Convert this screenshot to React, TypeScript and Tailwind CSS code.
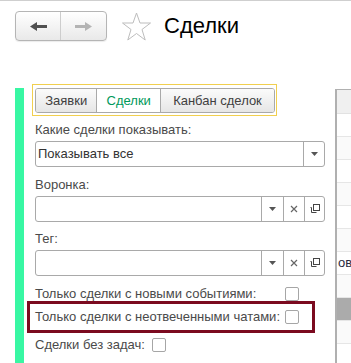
import React from 'react';

const TABS = [
    { label: 'Заявки', w: 'w-[61px]', active: false },
    { label: 'Сделки', w: 'w-[64px]', active: true },
    { label: 'Канбан сделок', w: 'w-[115px]', active: false },
];

function DownArrow() {
    return (
        <svg width="7" height="4" viewBox="0 0 7 4">
            <path d="M0 0H7L3.5 4Z" fill="#555" />
        </svg>
    );
}

function ClearIcon() {
    return (
        <svg width="8" height="8" viewBox="0 0 8 8">
            <path d="M1 1L7 7M7 1L1 7" stroke="#666" strokeWidth="1.2" />
        </svg>
    );
}

function OpenIcon() {
    return (
        <svg width="12" height="12" viewBox="0 0 12 12" fill="none" stroke="#444" strokeWidth="1">
            <rect x="4.5" y="1.5" width="6" height="6" />
            <path d="M2.5 4.5V9.5H7.5" />
            <path d="M1.5 4.5H2.5" />
        </svg>
    );
}

function Checkbox() {
    return <div className="w-[14px] h-[14px] border border-[#a6a6a6] rounded-[2px] bg-white shrink-0" />;
}

function Field() {
    return (
        <div className="ml-[3px] mt-[3px] w-[290px] h-[26px] flex border border-[#a9a9a9] rounded-[3px] bg-white">
            <div className="flex-1" />
            <div className="w-[22px] border-l border-[#a9a9a9] flex items-center justify-center"><DownArrow /></div>
            <div className="w-[21px] border-l border-[#a9a9a9] flex items-center justify-center"><ClearIcon /></div>
            <div className="w-[20px] border-l border-[#a9a9a9] flex items-center justify-center"><OpenIcon /></div>
        </div>
    );
}

export default function App() {
    return (
        <div className="w-[351px] h-[363px] bg-white flex overflow-hidden text-[13px] leading-[16px]"
            style={{ fontFamily: '"Liberation Sans", Arial, sans-serif' }}>
            {/* left edge */}
            <div className="w-[2px]" />
            <div className="w-[1px] bg-[#eed97a]" />

            <div className="flex-1 flex flex-col">
                {/* top strip */}
                <div className="h-[3px] border-b border-[#cfcfcf] flex">
                    <div className="w-[163px]" />
                    <div className="w-[1px] bg-[#cfcfcf]" />
                    <div className="w-[171px]" />
                    <div className="w-[1px] bg-[#cfcfcf]" />
                </div>

                {/* header */}
                <div className="flex items-center mt-[10px] h-[30px]">
                    <div className="ml-[15px] w-[92px] h-[30px] flex border border-[#b5b5b5] rounded-[4px] bg-gradient-to-b from-white to-[#e9e9e9] shadow-[0_1px_1px_rgba(0,0,0,0.08)]">
                        <div className="w-[45px] flex items-center justify-center border-r border-[#cdcdcd]">
                            <svg width="17" height="9" viewBox="0 0 17 9">
                                <path d="M0 4.5L7 0V3H17V6H7V9Z" fill="#505050" />
                            </svg>
                        </div>
                        <div className="flex-1 flex items-center justify-center">
                            <svg width="17" height="9" viewBox="0 0 17 9">
                                <path d="M17 4.5L10 0V3H0V6H10V9Z" fill="#b4b4b4" />
                            </svg>
                        </div>
                    </div>
                    <svg className="ml-[14px]" width="31" height="29" viewBox="0 0 31 29">
                        <path d="M15.5 1L19 11H29.5L21 17.5L24.2 28L15.5 21.5L6.8 28L10 17.5L1.5 11H12Z"
                            fill="none" stroke="#bdbdbd" strokeWidth="1" strokeLinejoin="miter" />
                    </svg>
                    <div className="ml-[12px] text-[22px] leading-[26px] text-black">Сделки</div>
                </div>

                {/* body */}
                <div className="flex-1 flex mt-[43px]">
                    <div className="ml-[15px] mt-[4px] w-[9px] bg-[#38f7a3]" />

                    <div className="ml-[8px] w-[293px] flex flex-col text-[#4a4a4a]">
                        {/* tabs */}
                        <div className="w-[245px] h-[32px] border border-[#f1cf4f] pl-[2px] pt-[3px]">
                            <div className="flex h-[25px] w-[240px] border border-[#a9a9a9] rounded-[3px] overflow-hidden">
                                {TABS.map((t, i) => (
                                    <div key={t.label}
                                        className={`${t.w} ${i > 0 ? 'border-l border-[#a9a9a9]' : ''} flex items-center justify-center ${t.active ? 'bg-white text-[#00995a]' : 'bg-gradient-to-b from-[#fbfbfb] to-[#e6e6e6] text-[#404040]'}`}>
                                        {t.label}
                                    </div>
                                ))}
                            </div>
                        </div>

                        <div className="pl-[3px] mt-[6px]">Какие сделки показывать:</div>
                        <div className="ml-[3px] mt-[3px] w-[290px] h-[26px] flex border border-[#a9a9a9] rounded-[3px] bg-white">
                            <div className="flex-1 flex items-center pl-[2px] text-[#333]">Показывать все</div>
                            <div className="w-[21px] border-l border-[#a9a9a9] flex items-center justify-center"><DownArrow /></div>
                        </div>

                        <div className="pl-[3px] mt-[10px]">Воронка:</div>
                        <Field />

                        <div className="pl-[3px] mt-[9px]">Тег:</div>
                        <Field />

                        <div className="mt-[8px] h-[20px] flex items-center pl-[3px]">
                            <div className="w-[250px]">Только сделки с новыми событиями:</div>
                            <Checkbox />
                        </div>

                        <div className="relative mt-[3px] h-[20px] flex items-center pl-[3px]">
                            <div className="absolute left-[-5px] top-[-6px] w-[288px] h-[32px] border-[3px] border-[#7b0a1f]" />
                            <div className="w-[250px]">Только сделки с неотвеченными чатами:</div>
                            <Checkbox />
                        </div>

                        <div className="mt-[8px] h-[20px] flex items-center pl-[3px] gap-[7px]">
                            <div>Сделки без задач:</div>
                            <Checkbox />
                        </div>
                    </div>

                    {/* right table, partly visible */}
                    <div className="ml-[10px] mt-[5px] flex-1 flex flex-col border-l-2 border-t border-[#b0b0b0] overflow-hidden">
                        <div className="h-[24px] bg-[#f0f0f0] border-b border-[#e2e2e2] shrink-0" />
                        {Array.from({ length: 12 }).map((_, i) => (
                            <div key={i}
                                className={`h-[23px] shrink-0 border-b border-[#e6e6e6] flex items-center pl-[1px] whitespace-nowrap text-[#2b2b40] ${i === 8 ? 'bg-[#ababab]' : i % 2 ? 'bg-[#fafafa]' : 'bg-white'}`}>
                                {i === 6 ? 'ове' : ''}
                            </div>
                        ))}
                    </div>
                </div>
            </div>
        </div>
    );
}
